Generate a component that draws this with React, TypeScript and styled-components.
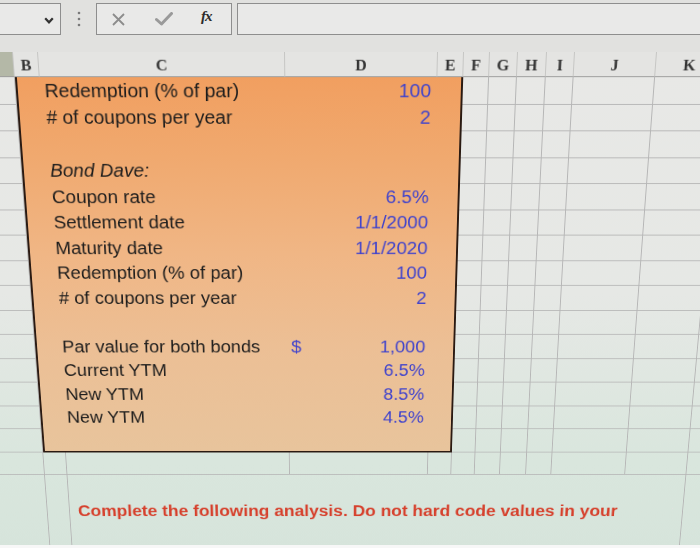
import styled, { createGlobalStyle } from 'styled-components';

const GlobalStyle = createGlobalStyle`
  html, body {
    margin: 0;
    padding: 0;
    background: #f7f7f7;
  }
  body {
    font-family: 'Liberation Sans', Arial, sans-serif;
    overflow: hidden;
  }
`;

const Page = styled.div`
  width: 700px;
  height: 545px;
  overflow: hidden;
  background: #e1e1df;
  display: flex;
  flex-direction: column;
`;

const Toolbar = styled.div`
  height: 36px;
  padding-top: 3px;
  box-sizing: border-box;
  display: flex;
  align-items: flex-start;
  flex-shrink: 0;
`;

const NameBox = styled.div`
  width: 62px;
  height: 32px;
  margin-left: -1px;
  box-sizing: border-box;
  border: 1px solid #8e8e8e;
  background: #e9e9e8;
  display: flex;
  align-items: center;
  justify-content: flex-end;
  padding: 3px 6px 0 0;
`;

const Dots = styled.div`
  width: 35px;
  height: 32px;
  display: flex;
  align-items: center;
  justify-content: center;
`;

const FuncBox = styled.div`
  width: 136px;
  height: 32px;
  box-sizing: border-box;
  border: 1px solid #8e8e8e;
  background: #e9e9e8;
  display: flex;
  align-items: center;
  padding-left: 15px;
  gap: 30px;
`;

const Fx = styled.span`
  font-family: 'Liberation Serif', 'Times New Roman', serif;
  font-style: italic;
  font-weight: bold;
  font-size: 15px;
  color: #2c2c2c;
  margin-left: -2px;
  margin-top: -6px;
  letter-spacing: -1px;
`;

const FormulaBox = styled.div`
  flex: 1;
  height: 32px;
  margin-left: 5px;
  box-sizing: border-box;
  border: 1px solid #8e8e8e;
  border-right: none;
  background: #e9e9e8;
`;

const Gap = styled.div`
  height: 16px;
  flex-shrink: 0;
`;

const SheetWrap = styled.div`
  width: 810px;
  margin-left: -50px;
  flex-shrink: 0;
  transform-origin: 385px 0;
  transform: perspective(1000px) rotateX(-13.2deg);
  background: linear-gradient(180deg, #e8e8e6 0%, #e6e8e5 45%, #d9e6dd 80%, #d6e4db 100%);
`;

const Sheet = styled.div`
  display: grid;
  grid-template-columns: 63px 25px 247px 153px 26px 26px 28px 29px 28px 82px 68px 1fr;
  grid-template-rows: 26px repeat(16, 28.5px) 100px;
`;

const HeaderCell = styled.div<{ $dark?: boolean }>`
  box-sizing: border-box;
  background: ${(p) => (p.$dark ? '#b4b8a7' : '#e4e4e2')};
  border-right: 1px solid #c6c6c4;
  border-bottom: 1px solid #9c9c9c;
  font-family: 'Liberation Serif', 'Times New Roman', serif;
  font-weight: bold;
  font-size: 16px;
  color: #343434;
  display: flex;
  align-items: center;
  justify-content: center;
  padding-top: 3px;
`;

const Cell = styled.div`
  box-sizing: border-box;
  border-right: 1px solid #b6b6b6;
  border-bottom: 1px solid #b6b6b6;
`;

const Box = styled.div`
  grid-column: 2 / 6;
  grid-row: 2 / 17;
  box-sizing: border-box;
  border: 2px solid #2a1a12;
  border-top: none;
  background: linear-gradient(
    180deg,
    #f19f60 0%,
    #f0a96f 20%,
    #f0b685 45%,
    #ecbf95 70%,
    #e8c49c 100%
  );
  display: grid;
  grid-template-columns: 23px 247px 153px 24px;
  grid-auto-rows: 28.5px;
`;

const Label = styled.div<{ $italic?: boolean }>`
  grid-column: 2;
  display: flex;
  align-items: center;
  padding-left: 4px;
  font-size: 19.5px;
  font-style: ${(p) => (p.$italic ? 'italic' : 'normal')};
  color: #1c1c1c;
  white-space: nowrap;
`;

const Value = styled.div`
  grid-column: 3;
  display: flex;
  align-items: center;
  justify-content: space-between;
  padding: 0 6px 0 3px;
  font-size: 19.5px;
  color: #4043cc;
`;

const Note = styled.div`
  grid-column: 3 / 11;
  grid-row: 18;
  box-sizing: border-box;
  padding: 34px 0 0 9px;
  font-size: 19.5px;
  font-weight: bold;
  color: #d6402c;
  white-space: nowrap;
  line-height: 24px;
`;

const Chevron = () => (
  <svg width="10" height="7" viewBox="0 0 10 7">
    <path d="M1.2 1.2 L5 5.3 L8.8 1.2" fill="none" stroke="#333" strokeWidth="2.2" />
  </svg>
);

const VDots = () => (
  <svg width="4" height="16" viewBox="0 0 4 16">
    <circle cx="2" cy="2" r="1.3" fill="#7a7a7a" />
    <circle cx="2" cy="8" r="1.3" fill="#7a7a7a" />
    <circle cx="2" cy="14" r="1.3" fill="#7a7a7a" />
  </svg>
);

const Cross = () => (
  <svg width="13" height="13" viewBox="0 0 13 13">
    <path d="M1 1 L12 12 M12 1 L1 12" stroke="#8c8c8c" strokeWidth="1.8" />
  </svg>
);

const Check = () => (
  <svg width="18" height="14" viewBox="0 0 18 14">
    <path
      d="M1.5 7.5 L6.5 12 L16.5 1.5"
      fill="none"
      stroke="#9a9a9a"
      strokeWidth="3"
      strokeLinecap="round"
      strokeLinejoin="round"
    />
  </svg>
);

const columns = ['', 'B', 'C', 'D', 'E', 'F', 'G', 'H', 'I', 'J', 'K', ''];

type Line = { label?: string; value?: string; italic?: boolean; dollar?: boolean };

const lines: Line[] = [
  { label: 'Redemption (% of par)', value: '100' },
  { label: '# of coupons per year', value: '2' },
  {},
  { label: 'Bond Dave:', italic: true },
  { label: 'Coupon rate', value: '6.5%' },
  { label: 'Settlement date', value: '1/1/2000' },
  { label: 'Maturity date', value: '1/1/2020' },
  { label: 'Redemption (% of par)', value: '100' },
  { label: '# of coupons per year', value: '2' },
  {},
  { label: 'Par value for both bonds', value: '1,000', dollar: true },
  { label: 'Current YTM', value: '6.5%' },
  { label: 'New YTM', value: '8.5%' },
  { label: 'New YTM', value: '4.5%' },
  {},
];

// 15 box rows x 8 free columns, one full row of 12, then A, B, K and the tail of the note row
const emptyCells = 15 * 8 + 12 + 4;

export default function App() {
  const boxRows = lines.map((l, i) => (
    <Label key={`l${i}`} $italic={l.italic} style={{ gridRow: i + 1 }}>
      {l.label}
    </Label>
  ));
  const boxValues = lines.map((l, i) =>
    l.value ? (
      <Value key={`v${i}`} style={{ gridRow: i + 1 }}>
        <span>{l.dollar ? '$' : ''}</span>
        <span>{l.value}</span>
      </Value>
    ) : null
  );

  return (
    <>
      <GlobalStyle />
      <Page>
        <Toolbar>
          <NameBox>
            <Chevron />
          </NameBox>
          <Dots>
            <VDots />
          </Dots>
          <FuncBox>
            <Cross />
            <Check />
            <Fx>fx</Fx>
          </FuncBox>
          <FormulaBox />
        </Toolbar>
        <Gap />
        <SheetWrap>
          <Sheet>
            {columns.map((c, i) => (
              <HeaderCell key={`h${i}`} $dark={i === 0}>
                {c}
              </HeaderCell>
            ))}
            <Box>
              {boxRows}
              {boxValues}
            </Box>
            <Note>Complete the following analysis. Do not hard code values in your</Note>
            {Array.from({ length: emptyCells }, (_, i) => (
              <Cell key={`c${i}`} />
            ))}
          </Sheet>
        </SheetWrap>
      </Page>
    </>
  );
}
